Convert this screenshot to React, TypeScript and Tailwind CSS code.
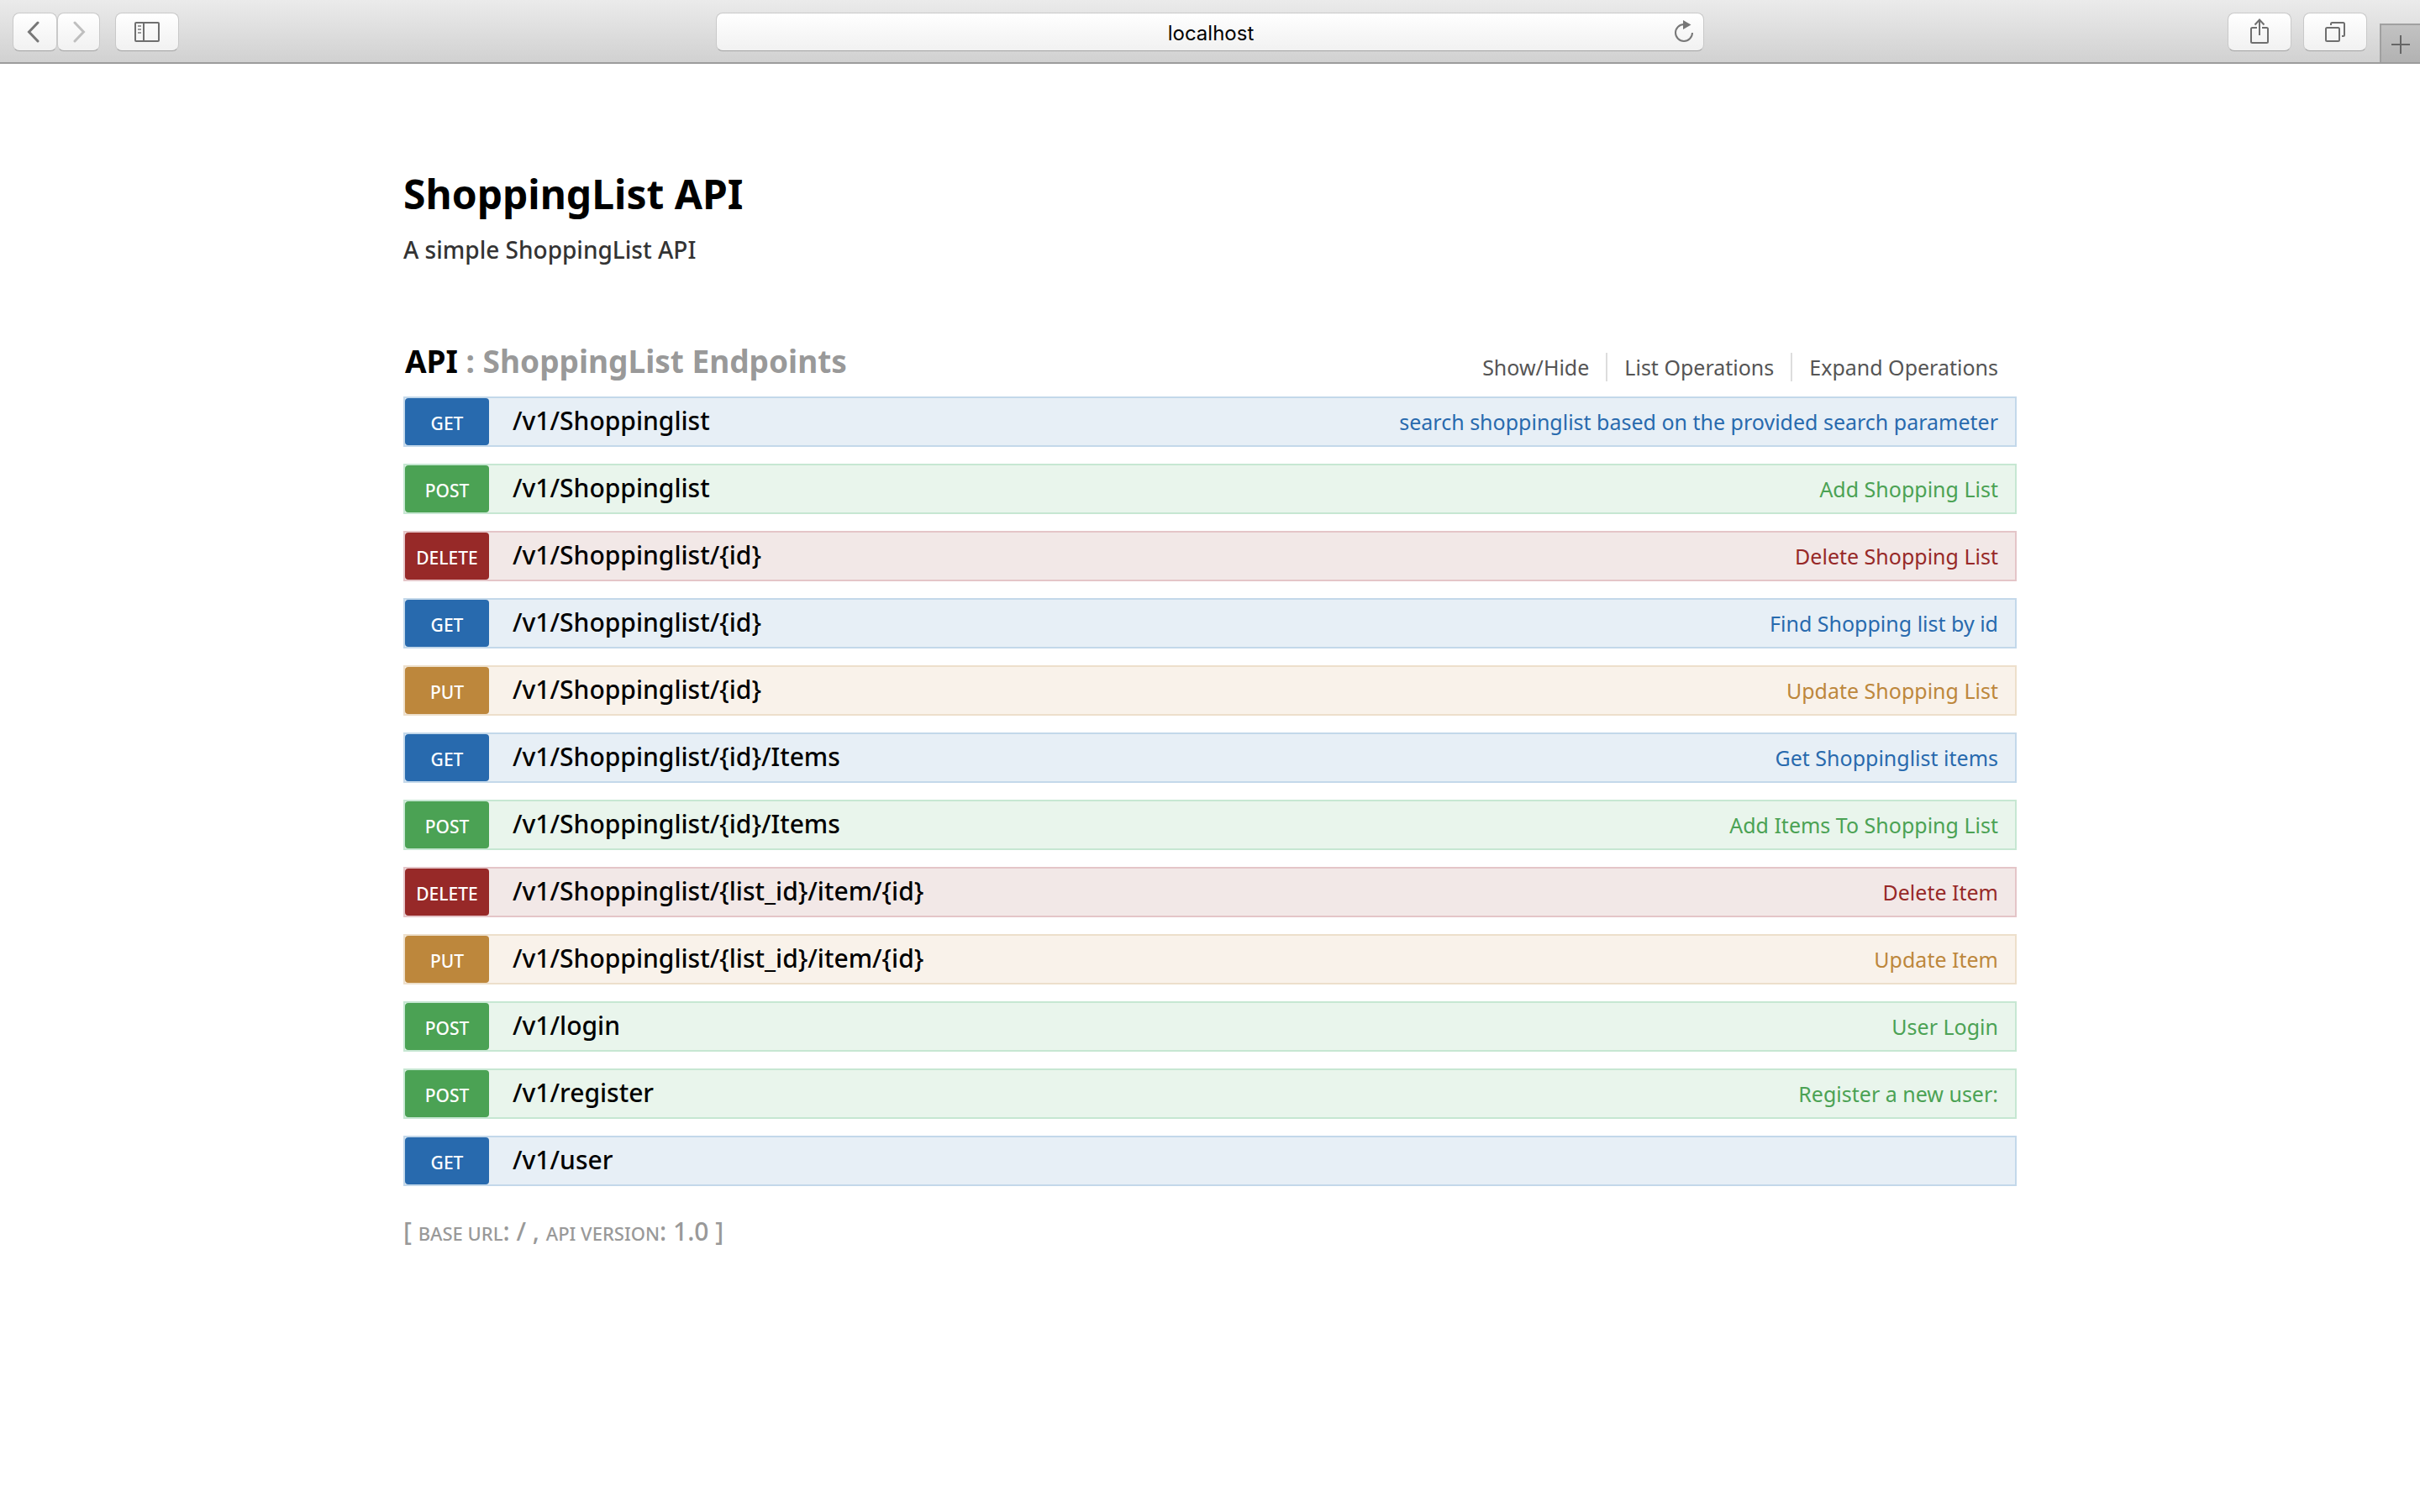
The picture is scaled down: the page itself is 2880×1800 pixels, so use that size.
import { ReactNode } from "react";

type Method = "GET" | "POST" | "DELETE" | "PUT";

type Endpoint = { method: Method; path: string; summary: string };

const ENDPOINTS: Endpoint[] = [
  { method: "GET", path: "/v1/Shoppinglist", summary: "search shoppinglist based on the provided search parameter" },
  { method: "POST", path: "/v1/Shoppinglist", summary: "Add Shopping List" },
  { method: "DELETE", path: "/v1/Shoppinglist/{id}", summary: "Delete Shopping List" },
  { method: "GET", path: "/v1/Shoppinglist/{id}", summary: "Find Shopping list by id" },
  { method: "PUT", path: "/v1/Shoppinglist/{id}", summary: "Update Shopping List" },
  { method: "GET", path: "/v1/Shoppinglist/{id}/Items", summary: "Get Shoppinglist items" },
  { method: "POST", path: "/v1/Shoppinglist/{id}/Items", summary: "Add Items To Shopping List" },
  { method: "DELETE", path: "/v1/Shoppinglist/{list_id}/item/{id}", summary: "Delete Item" },
  { method: "PUT", path: "/v1/Shoppinglist/{list_id}/item/{id}", summary: "Update Item" },
  { method: "POST", path: "/v1/login", summary: "User Login" },
  { method: "POST", path: "/v1/register", summary: "Register a new user:" },
  { method: "GET", path: "/v1/user", summary: "" },
];

const TONES: Record<Method, { row: string; badge: string; text: string }> = {
  GET: { row: "bg-[#e7eff6] border-[#c3d8ea]", badge: "bg-[#286aae]", text: "text-[#286aae]" },
  POST: { row: "bg-[#e9f5ec] border-[#c6e7d2]", badge: "bg-[#4ba254]", text: "text-[#4ba254]" },
  DELETE: { row: "bg-[#f2e8e7] border-[#e4c5c8]", badge: "bg-[#972928]", text: "text-[#972928]" },
  PUT: { row: "bg-[#f9f2ea] border-[#eddfcb]", badge: "bg-[#bd873c]", text: "text-[#bd873c]" },
};

function BarButton({ label, className, children }: { label: string; className: string; children: ReactNode }) {
  return (
    <button
      type="button"
      aria-label={label}
      className={`flex h-[46px] items-center justify-center rounded-lg border border-[#c9c9c9] border-b-[#a3a3a3] bg-linear-to-b from-white to-[#f1f1f1] ${className}`}
    >
      {children}
    </button>
  );
}

function Toolbar() {
  return (
    <header className="grid h-19 grid-cols-[71fr_98fr_71fr] border-b-2 border-[#9c9c9c] bg-linear-to-b from-[#ebebeb] to-[#d1d1d1]">
      <div className="flex items-start pt-[15px] pl-[15px]">
        <BarButton label="Back" className="w-[53px] pr-1">
          <svg width="16" height="26" viewBox="0 0 16 26" fill="none" stroke="#777" strokeWidth="3" strokeLinecap="round">
            <path d="M13 2 2.5 13 13 24" />
          </svg>
        </BarButton>
        <BarButton label="Forward" className="w-[51px]">
          <svg width="16" height="26" viewBox="0 0 16 26" fill="none" stroke="#bfbfbf" strokeWidth="3" strokeLinecap="round">
            <path d="M3 2 13.5 13 3 24" />
          </svg>
        </BarButton>
        <BarButton label="Show sidebar" className="ml-[18px] w-19">
          <svg width="30" height="24" viewBox="0 0 30 24" fill="none" stroke="#6f6f6f" strokeWidth="2">
            <rect x="1" y="1" width="28" height="22" rx="1" />
            <path d="M11 1v22" />
            <path d="M4 5h4M4 9h4M4 13h4" stroke="#999" />
          </svg>
        </BarButton>
      </div>

      <div className="relative mt-[15px] h-[46px]">
        <input
          type="text"
          aria-label="Address"
          defaultValue="localhost"
          className="h-full w-full rounded-lg border border-[#c9c9c9] border-b-[#a3a3a3] bg-linear-to-b from-white to-[#f1f1f1] pt-0.5 pl-0.5 text-center font-['Inter',sans-serif] text-2xl text-black outline-none"
        />
        <button type="button" aria-label="Reload" className="absolute top-2 right-3 flex h-7 w-6">
          <svg width="24" height="28" viewBox="0 0 24 28" fill="none">
            <path d="M12 6A10 10 0 1 0 22 16" stroke="#777" strokeWidth="2" />
            <path d="M11 1 20.5 6.5 11 12Z" fill="#777" />
          </svg>
        </button>
      </div>

      <div className="flex items-start justify-end pt-[15px]">
        <BarButton label="Share" className="w-19">
          <svg width="22" height="32" viewBox="0 0 22 32" fill="none" stroke="#6f6f6f" strokeWidth="2">
            <path d="M8 11H2.5A1.500 1.500 0 0 0 1 12.500V27.500A1.500 1.500 0 0 0 2.500 29H19.500A1.500 1.500 0 0 0 21 27.500V12.500A1.500 1.500 0 0 0 19.500 11H14" />
            <path d="M11 20V1.500M5.500 7.500 11 1.500 16.500 7.500" />
          </svg>
        </BarButton>
        <BarButton label="Show all tabs" className="ml-[14px] w-19">
          <svg width="24" height="24" viewBox="0 0 24 24" fill="none" stroke="#6f6f6f" strokeWidth="2">
            <rect x="1" y="7" width="16" height="16" rx="1.500" />
            <path d="M7 4V2.500A1.500 1.500 0 0 1 8.500 1H21.500A1.500 1.500 0 0 1 23 2.500V15.500A1.500 1.500 0 0 1 21.500 17H20" />
          </svg>
        </BarButton>
        <button
          type="button"
          aria-label="New tab"
          className="mt-[13px] ml-[15px] flex h-[46px] w-12 items-center justify-center border-t-2 border-l-2 border-[#a0a0a0] bg-linear-to-b from-[#c2c2c2] to-[#b2b2b2] pt-0.5"
        >
          <svg width="22" height="22" viewBox="0 0 22 22" stroke="#666" strokeWidth="2">
            <path d="M11 0v22M0 11h22" />
          </svg>
        </button>
      </div>
    </header>
  );
}

function EndpointRow({ method, path, summary }: Endpoint) {
  const tone = TONES[method];
  return (
    <li className={`flex items-start border-2 ${tone.row}`}>
      <a href="#operation" className={`h-14 w-25 shrink-0 rounded-sm text-center text-[21px] leading-[60px] font-medium text-white ${tone.badge}`}>
        {method}
      </a>
      <a href="#operation" className="ml-7 text-3xl leading-[54px] font-medium text-black">
        {path}
      </a>
      {summary && (
        <a href="#operation" className={`mr-5 ml-auto text-[25px] leading-14 ${tone.text}`}>
          {summary}
        </a>
      )}
    </li>
  );
}

export default function App() {
  return (
    <div className="min-h-screen bg-white font-['Noto_Sans',sans-serif]">
      <Toolbar />
      <main className="mx-auto w-2/3 pt-[123px]">
        <h1 className="text-5xl leading-16 font-bold text-black">ShoppingList API</h1>
        <p className="mt-[14px] text-[28px] leading-10 font-medium text-[#333]">A simple ShoppingList API</p>

        <section className="mt-[89px]">
          <div className="flex items-end justify-between">
            <h2 className="pl-0.5 text-[37px] leading-12 font-bold text-[#999]">
              <a href="#api" className="text-black">API</a> : ShoppingList Endpoints
            </h2>
            <nav className="mr-0.5 flex divide-x-2 divide-[#ddd] text-[25px] leading-[34px] text-[#555]">
              <a href="#toggle" className="px-5">Show/Hide</a>
              <a href="#list" className="px-5">List Operations</a>
              <a href="#expand" className="px-5">Expand Operations</a>
            </nav>
          </div>
          <ul className="mt-[18px] flex flex-col gap-5">
            {ENDPOINTS.map((e) => (
              <EndpointRow key={e.method + e.path} {...e} />
            ))}
          </ul>
        </section>

        <footer className="mt-[34px] text-3xl leading-10 font-medium text-[#999]">
          [ <span className="text-[22px] uppercase">base url</span>: / ,{" "}
          <span className="text-[22px] uppercase">api version</span>: 1.0 ]
        </footer>
      </main>
    </div>
  );
}
